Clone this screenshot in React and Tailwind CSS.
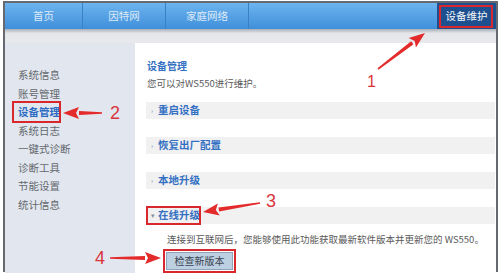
import React from "react";

const font = { fontFamily: '"Noto Sans CJK SC", "Noto Sans", sans-serif' };

const menu = ["系统信息", "账号管理", "设备管理", "系统日志", "一键式诊断", "诊断工具", "节能设置", "统计信息"];

function Bar({ label, open, boxed }) {
  return (
    <div className="relative flex h-[17px] items-center bg-[#f1f1f2] pl-[5px]">
      <span className="w-[7px] text-[7px] leading-none text-[#8a8f99]">{open ? "▾" : "›"}</span>
      <span className="text-[10.5px] font-semibold leading-none text-[#3470c2]">{label}</span>
      {boxed && <div className="absolute left-0 top-[-1px] h-[19px] w-[55px] border-2 border-[#d8282e]" />}
    </div>
  );
}

function Arrow({ x1, y1, x2, y2 }) {
  const dx = x2 - x1, dy = y2 - y1;
  const len = Math.hypot(dx, dy);
  const ux = dx / len, uy = dy / len;
  const hl = 16, hw = 6;
  const bx = x2 - ux * hl, by = y2 - uy * hl;
  const px = -uy, py = ux;
  return (
    <g>
      <polygon
        points={`${x1 + px * 0.8},${y1 + py * 0.8} ${bx + px * 2},${by + py * 2} ${bx - px * 2},${by - py * 2} ${x1 - px * 0.8},${y1 - py * 0.8}`}
        fill="#e32b2b"
      />
      <polygon
        points={`${x2},${y2} ${bx + px * hw},${by + py * hw} ${bx + ux * 3},${by + uy * 3} ${bx - px * hw},${by - py * hw}`}
        fill="#e32b2b"
      />
    </g>
  );
}

export default function App() {
  return (
    <div className="relative h-[274px] w-[500px] overflow-hidden bg-white pl-[3px] pt-[1px]" style={font}>
      <div className="flex h-[271px] w-[495px] flex-col border-2 border-[#666a70]">
        {/* top nav */}
        <div className="flex h-[26px] shrink-0 bg-gradient-to-b from-[#6db4ef] to-[#3f8fda]">
          {[["首页", "w-[78px]"], ["因特网", "w-[83px]"], ["家庭网络", "w-[83px]"]].map(([t, w]) => (
            <div key={t} className={`${w} flex items-center justify-center border-r border-[#3b7fc4] text-[10.5px] text-[#dce9f7]`}>
              {t}
            </div>
          ))}
          <div className="flex-1" />
          <div className="relative flex w-[59px] items-center justify-center bg-[#1e4f8e] text-[10.5px] text-[#f2f6fb]">
            设备维护
            <div className="absolute left-[2px] top-[2px] h-[23px] w-[54px] border-2 border-[#d8282e]" />
          </div>
        </div>
        {/* shadow band */}
        <div className="h-[14px] shrink-0 bg-gradient-to-b from-[#a9afb8] via-[#e4e6ea] via-30% to-[#e8e9ec]" />
        <div className="flex flex-1">
          {/* sidebar */}
          <div className="w-[130px] shrink-0 bg-[#e2e7ef] pl-[13px] pt-[23px]">
            {menu.map((m) => (
              <div key={m} className="relative h-[18.5px] text-[10.5px] leading-[18.5px]">
                <span className={m === "设备管理" ? "font-semibold text-[#2d6bc3]" : "text-[#62676e]"}>{m}</span>
                {m === "设备管理" && (
                  <div className="absolute left-[-6px] top-[-2px] h-[22px] w-[49px] border-2 border-[#d8282e]" />
                )}
              </div>
            ))}
          </div>
          {/* content */}
          <div className="flex-1 bg-white pl-[11px] pr-[1px] pt-[16px]">
            <div className="pl-[1px] text-[10px] font-semibold leading-[14px] text-[#3470c2]">设备管理</div>
            <div className="mt-[3px] pl-[1px] text-[9.5px] leading-[14px] text-[#5a5a5a]">您可以对WS550进行维护。</div>
            <div className="mt-[12px] flex flex-col gap-[18px]">
              <Bar label="重启设备" />
              <Bar label="恢复出厂配置" />
              <Bar label="本地升级" />
              <Bar label="在线升级" open boxed />
            </div>
            <div className="mt-[8px] pl-[21px] text-[9.5px] leading-[14px] text-[#5a5a5a]">
              连接到互联网后，您能够使用此功能获取最新软件版本并更新您的 WS550。
            </div>
            <div className="ml-[17px] mt-[-2px] inline-block border-2 border-[#d8282e] p-[1px]">
              <div className="flex h-[18px] w-[67px] items-center justify-center border border-[#8ea3b8] bg-[#bdd0e2] text-[10px] text-[#3a4350]">
                检查新版本
              </div>
            </div>
          </div>
        </div>
      </div>
      {/* annotations */}
      <svg className="pointer-events-none absolute inset-0" width="500" height="274">
        <Arrow x1={378} y1={69} x2={425} y2={33} />
        <Arrow x1={102} y1={113} x2={63} y2={113} />
        <Arrow x1={260} y1={203} x2={203} y2={212} />
        <Arrow x1={110} y1={258} x2={161} y2={258} />
      </svg>
      <div className="absolute left-[367px] top-[74px] text-[16px] leading-none text-[#d8343a]" style={{ fontFamily: '"Liberation Sans", sans-serif' }}>1</div>
      <div className="absolute left-[110px] top-[104px] text-[18px] leading-none text-[#d8343a]" style={{ fontFamily: '"Liberation Sans", sans-serif' }}>2</div>
      <div className="absolute left-[266px] top-[192px] text-[18px] leading-none text-[#d8343a]" style={{ fontFamily: '"Liberation Sans", sans-serif' }}>3</div>
      <div className="absolute left-[95px] top-[249px] text-[18px] leading-none text-[#d8343a]" style={{ fontFamily: '"Liberation Sans", sans-serif' }}>4</div>
    </div>
  );
}
